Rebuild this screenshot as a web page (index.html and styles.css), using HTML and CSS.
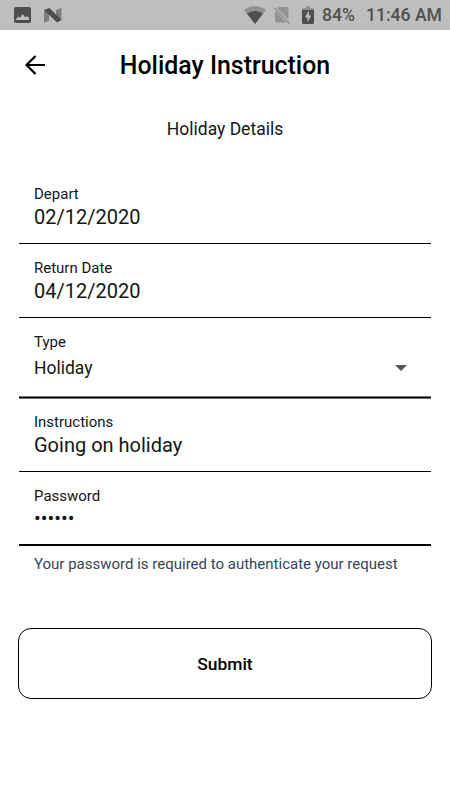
FILE: index.html
```html
<!DOCTYPE html>
<html lang="en">
<head>
<meta charset="utf-8">
<title>Holiday Instruction</title>
<link rel="stylesheet" href="styles.css">
</head>
<body>
<div class="status">
  <svg class="ic-photo" width="17" height="16" viewBox="0 0 17 16"><path fill-rule="evenodd" d="M2 0h13a2 2 0 0 1 2 2v12a2 2 0 0 1-2 2H2a2 2 0 0 1-2-2V2a2 2 0 0 1 2-2zM2 13h13v-2l-2-2-1.500 1.500L8.500 7l-2.500 4-1.500-1.500L2 12z"/></svg>
  <svg class="ic-n" width="18" height="15" viewBox="0 0 18 15"><path class="soft" d="M0 2l5 3v8l-5 1.500zM12 2l5.500-2v12l-5.500-3z"/><path d="M0 2L5.500 0 17.500 12l-4.500 2.500z"/></svg>
  <span class="spacer"></span>
  <svg class="ic-wifi" width="22" height="18" viewBox="0 0 22 18"><path class="faint" d="M0 4Q11-4 22 4L11 18z"/><path d="M3 7.500Q11 2.500 19 7.500L11 18z"/></svg>
  <svg class="ic-sim" width="16" height="18" viewBox="0 0 16 18"><path class="faint" d="M5 1h8a1.500 1.500 0 0 1 1.500 1.500v11L3.500 2.500zM1 4.500L12.500 16.500H2.500A1.500 1.500 0 0 1 1 15z"/><path class="slash" d="M.5 2L15.500 17.500"/></svg>
  <svg class="ic-bat" width="12" height="18" viewBox="0 0 12 18"><path class="faint" d="M4 0h4v2h3l1 1v2H0V3l1-1h3z"/><path fill-rule="evenodd" d="M0 4h12v13l-1 1H1l-1-1zM7 4.500L2.800 11.500h2.700v5L9.200 9.500H7z"/></svg>
  <span class="pct">84%</span>
  <span class="time">11:46 AM</span>
</div>
<header class="bar">
  <svg class="back" width="22" height="20" viewBox="0 0 22 20"><path d="M20 10H2M10.500 1L1.500 10l9 9"/></svg>
  <h1>Holiday Instruction</h1>
</header>
<main>
  <h2>Holiday Details</h2>
  <div class="field"><label>Depart</label><span class="value">02/12/2020</span></div>
  <div class="field"><label>Return Date</label><span class="value">04/12/2020</span></div>
  <div class="field select"><label>Type</label><span class="value">Holiday</span><svg class="caret" width="12" height="6" viewBox="0 0 12 6"><path d="M0 0h12L6 6z"/></svg></div>
  <div class="field"><label>Instructions</label><span class="value">Going on holiday</span></div>
  <div class="field password"><label>Password</label><span class="value">••••••</span></div>
  <p class="hint">Your password is required to authenticate your request</p>
  <button class="submit">Submit</button>
</main>
</body>
</html>
```
FILE: styles.css
```css
* { box-sizing: border-box; }
body { margin: 0; height: 800px; background: #fff; color: #151515; font-family: Roboto, sans-serif; overflow: hidden; }
.status { display: flex; align-items: center; height: 30px; padding: 0 8px 0 14px; background: #bebebe; color: #505050; font-size: 17.600px; font-weight: 500; }
.status svg { fill: #4e4e4e; }
.status .soft { fill: #7c7c7c; }
.status .faint { fill: #929292; }
.ic-n { margin-left: 13px; }
.spacer { flex: 1; }
.ic-sim { margin-left: 8px; }
.ic-sim .slash { stroke: #8a8a8a; stroke-width: 1.200; }
.ic-bat { margin: 0 8px 0 12px; }
.time { margin-left: 11px; }
.bar { position: relative; height: 70px; }
.back { position: absolute; left: 25px; top: 25px; fill: none; stroke: #000; stroke-width: 2.200; }
h1 { margin: 0; text-align: center; font-size: 24.900px; font-weight: 500; line-height: 71px; color: #000; }
main { padding: 0 19px; }
h2 { margin: 18px 0 0; text-align: center; font-size: 17.500px; font-weight: 400; line-height: 22px; height: 48px; }
.field { position: relative; height: 74px; padding: 15px 15px 0; border-bottom: 1px solid #000; }
.field:first-of-type { margin-top: 4px; }
.field label { display: block; font-size: 15px; line-height: 18px; }
.field .value { display: block; font-size: 20px; line-height: 28px; }
.field.select { height: 80px; box-shadow: inset 0 -1px #777, 0 1px #777; }
.field.select .value { font-size: 17.500px; line-height: 34px; }
.caret { position: absolute; right: 24px; top: 47px; fill: #555; }
.password { border-bottom-width: 2px; }
.password .value { line-height: 26px; }
.hint { margin: 0; padding: 8px 15px 0; font-size: 15px; line-height: 20px; color: #34445a; white-space: nowrap; }
.submit { display: block; width: 414px; height: 71px; margin: 54px 0 0 -1px; border: 1px solid #000; border-radius: 13px; background: #fff; font: 500 17.400px Roboto, sans-serif; color: #000; }
```
